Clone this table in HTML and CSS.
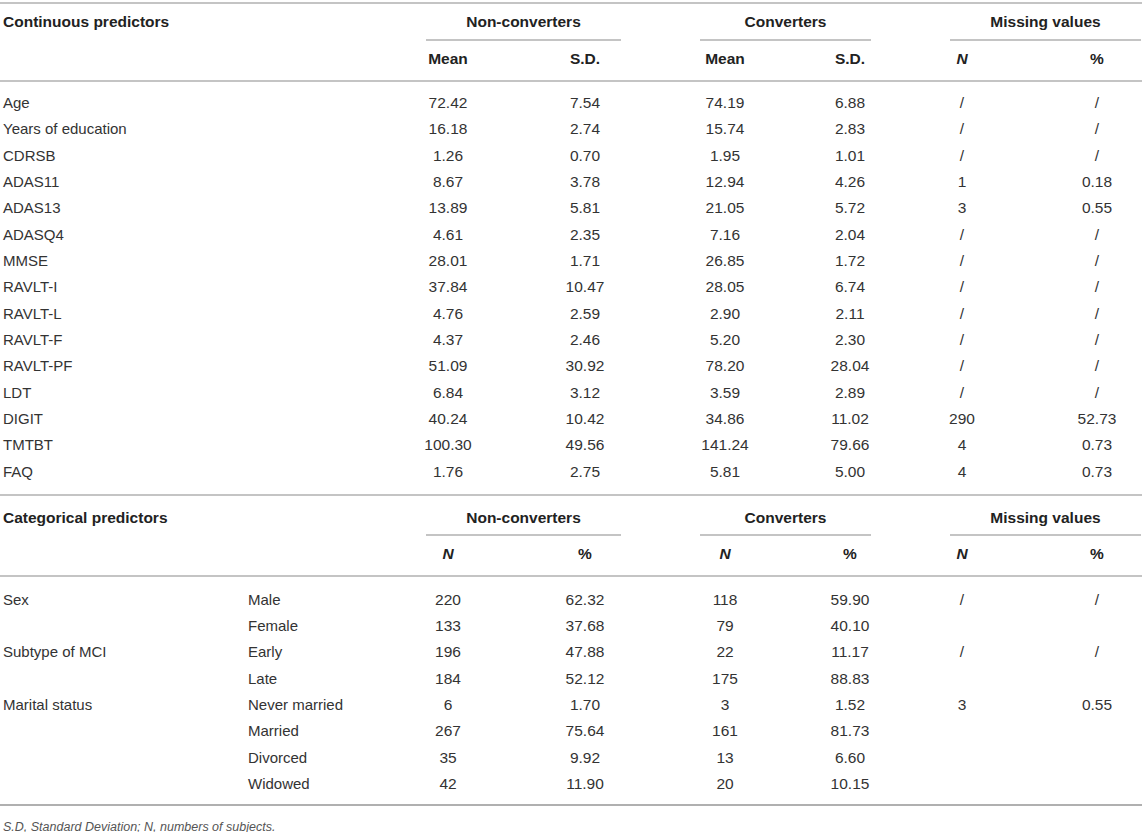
FILE: index.html
```html
<!DOCTYPE html>
<html lang="en">
<head>
<meta charset="utf-8">
<title>Predictors table</title>
<link rel="stylesheet" href="styles.css">
</head>
<body>
<div class="page">
  <div class="tbl">
    <section class="block cont">
      <div class="row ha">
        <div class="lbl b">Continuous predictors</div>
        <div></div>
        <div class="grp"><div class="grp-in b">Non-converters</div></div>
        <div class="grp"><div class="grp-in b">Converters</div></div>
        <div class="grp"><div class="grp-in b">Missing values</div></div>
      </div>
      <div class="row hb">
        <div></div><div></div>
        <div class="n b">Mean</div><div class="n b">S.D.</div>
        <div class="n b">Mean</div><div class="n b">S.D.</div>
        <div class="n b"><i>N</i></div><div class="n b">%</div>
      </div>
      <div class="tb">
        <div class="row d"><div class="lbl">Age</div><div></div><div class="n">72.42</div><div class="n">7.54</div><div class="n">74.19</div><div class="n">6.88</div><div class="n">/</div><div class="n">/</div></div>
        <div class="row d"><div class="lbl">Years of education</div><div></div><div class="n">16.18</div><div class="n">2.74</div><div class="n">15.74</div><div class="n">2.83</div><div class="n">/</div><div class="n">/</div></div>
        <div class="row d"><div class="lbl">CDRSB</div><div></div><div class="n">1.26</div><div class="n">0.70</div><div class="n">1.95</div><div class="n">1.01</div><div class="n">/</div><div class="n">/</div></div>
        <div class="row d"><div class="lbl">ADAS11</div><div></div><div class="n">8.67</div><div class="n">3.78</div><div class="n">12.94</div><div class="n">4.26</div><div class="n">1</div><div class="n">0.18</div></div>
        <div class="row d"><div class="lbl">ADAS13</div><div></div><div class="n">13.89</div><div class="n">5.81</div><div class="n">21.05</div><div class="n">5.72</div><div class="n">3</div><div class="n">0.55</div></div>
        <div class="row d"><div class="lbl">ADASQ4</div><div></div><div class="n">4.61</div><div class="n">2.35</div><div class="n">7.16</div><div class="n">2.04</div><div class="n">/</div><div class="n">/</div></div>
        <div class="row d"><div class="lbl">MMSE</div><div></div><div class="n">28.01</div><div class="n">1.71</div><div class="n">26.85</div><div class="n">1.72</div><div class="n">/</div><div class="n">/</div></div>
        <div class="row d"><div class="lbl">RAVLT-I</div><div></div><div class="n">37.84</div><div class="n">10.47</div><div class="n">28.05</div><div class="n">6.74</div><div class="n">/</div><div class="n">/</div></div>
        <div class="row d"><div class="lbl">RAVLT-L</div><div></div><div class="n">4.76</div><div class="n">2.59</div><div class="n">2.90</div><div class="n">2.11</div><div class="n">/</div><div class="n">/</div></div>
        <div class="row d"><div class="lbl">RAVLT-F</div><div></div><div class="n">4.37</div><div class="n">2.46</div><div class="n">5.20</div><div class="n">2.30</div><div class="n">/</div><div class="n">/</div></div>
        <div class="row d"><div class="lbl">RAVLT-PF</div><div></div><div class="n">51.09</div><div class="n">30.92</div><div class="n">78.20</div><div class="n">28.04</div><div class="n">/</div><div class="n">/</div></div>
        <div class="row d"><div class="lbl">LDT</div><div></div><div class="n">6.84</div><div class="n">3.12</div><div class="n">3.59</div><div class="n">2.89</div><div class="n">/</div><div class="n">/</div></div>
        <div class="row d"><div class="lbl">DIGIT</div><div></div><div class="n">40.24</div><div class="n">10.42</div><div class="n">34.86</div><div class="n">11.02</div><div class="n">290</div><div class="n">52.73</div></div>
        <div class="row d"><div class="lbl">TMTBT</div><div></div><div class="n">100.30</div><div class="n">49.56</div><div class="n">141.24</div><div class="n">79.66</div><div class="n">4</div><div class="n">0.73</div></div>
        <div class="row d"><div class="lbl">FAQ</div><div></div><div class="n">1.76</div><div class="n">2.75</div><div class="n">5.81</div><div class="n">5.00</div><div class="n">4</div><div class="n">0.73</div></div>
      </div>
    </section>
    <section class="block cat">
      <div class="row ha">
        <div class="lbl b">Categorical predictors</div>
        <div></div>
        <div class="grp"><div class="grp-in b">Non-converters</div></div>
        <div class="grp"><div class="grp-in b">Converters</div></div>
        <div class="grp"><div class="grp-in b">Missing values</div></div>
      </div>
      <div class="row hb">
        <div></div><div></div>
        <div class="n b"><i>N</i></div><div class="n b">%</div>
        <div class="n b"><i>N</i></div><div class="n b">%</div>
        <div class="n b"><i>N</i></div><div class="n b">%</div>
      </div>
      <div class="tb">
        <div class="row d"><div class="lbl">Sex</div><div class="lbl">Male</div><div class="n">220</div><div class="n">62.32</div><div class="n">118</div><div class="n">59.90</div><div class="n">/</div><div class="n">/</div></div>
        <div class="row d"><div class="lbl"></div><div class="lbl">Female</div><div class="n">133</div><div class="n">37.68</div><div class="n">79</div><div class="n">40.10</div><div class="n"></div><div class="n"></div></div>
        <div class="row d"><div class="lbl">Subtype of MCI</div><div class="lbl">Early</div><div class="n">196</div><div class="n">47.88</div><div class="n">22</div><div class="n">11.17</div><div class="n">/</div><div class="n">/</div></div>
        <div class="row d"><div class="lbl"></div><div class="lbl">Late</div><div class="n">184</div><div class="n">52.12</div><div class="n">175</div><div class="n">88.83</div><div class="n"></div><div class="n"></div></div>
        <div class="row d"><div class="lbl">Marital status</div><div class="lbl">Never married</div><div class="n">6</div><div class="n">1.70</div><div class="n">3</div><div class="n">1.52</div><div class="n">3</div><div class="n">0.55</div></div>
        <div class="row d"><div class="lbl"></div><div class="lbl">Married</div><div class="n">267</div><div class="n">75.64</div><div class="n">161</div><div class="n">81.73</div><div class="n"></div><div class="n"></div></div>
        <div class="row d"><div class="lbl"></div><div class="lbl">Divorced</div><div class="n">35</div><div class="n">9.92</div><div class="n">13</div><div class="n">6.60</div><div class="n"></div><div class="n"></div></div>
        <div class="row d"><div class="lbl"></div><div class="lbl">Widowed</div><div class="n">42</div><div class="n">11.90</div><div class="n">20</div><div class="n">10.15</div><div class="n"></div><div class="n"></div></div>
      </div>
    </section>
  </div>
  <p class="note">S.D, Standard Deviation; N, numbers of subjects.</p>
</div>
</body>
</html>
```

FILE: styles.css
```css
html, body {
  margin: 0;
  padding: 0;
  background: #ffffff;
  overflow: hidden;
}

body {
  font-family: "Liberation Sans", Arial, Helvetica, sans-serif;
  font-size: 15px;
  color: #333333;
}

.page {
  width: 1180px;
  padding-top: 2px;
}

.tbl {
  border-top: 2px solid #c4c4c4;
}

.row {
  display: grid;
  grid-template-columns: 245px 141px 124px 150px 130px 120px 104px 166px;
}

.lbl {
  padding-left: 3px;
  white-space: nowrap;
}

.n {
  text-align: center;
  white-space: nowrap;
  font-size: 15.5px;
}

.b {
  font-weight: bold;
  font-size: 15.5px;
  color: #222222;
}

/* header row with group titles */
.ha .lbl {
  padding-top: 9px;
  line-height: 18px;
}

.grp {
  grid-column: span 2;
  padding: 0 39px 0 40px;
}

.grp-in {
  padding: 9px 0 8px;
  line-height: 18px;
  text-align: center;
  border-bottom: 2px solid #c4c4c4;
  white-space: nowrap;
}

.cat .ha .lbl {
  padding-top: 13px;
}

.cat .grp-in {
  padding: 13px 0 7px;
}

/* sub header row */
.hb {
  padding: 9px 0 12px;
  line-height: 18px;
  border-bottom: 2px solid #c4c4c4;
}

/* data body */
.tb {
  padding: 8px 0 9px;
  border-bottom: 2px solid #c4c4c4;
}

.cat .tb {
  padding: 9.5px 0 6.5px;
  border-bottom: 2px solid #b0b0b0;
}

.d {
  height: 26.35px;
  line-height: 26.35px;
}

.note {
  margin: 0;
  padding: 13px 0 0 3px;
  font-size: 12.5px;
  line-height: 16px;
  font-style: italic;
  color: #555555;
}
```
